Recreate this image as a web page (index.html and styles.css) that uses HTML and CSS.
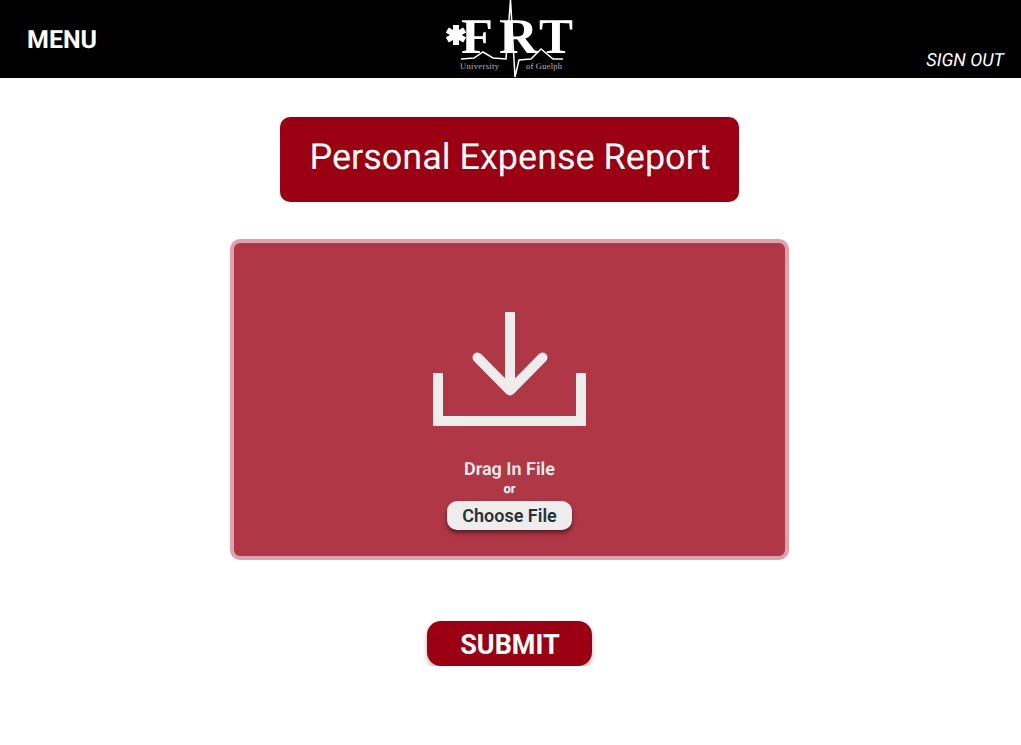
FILE: index.html
```html
<!DOCTYPE html>
<html lang="en">
<head>
  <meta charset="UTF-8">
  <meta name="viewport" content="width=device-width, initial-scale=1.0">
  <title>Personal Expense Report</title>
  <link rel="stylesheet" href="styles.css">
</head>
<body>
  <header class="top-bar">
    <a class="menu-link">MENU</a>
    <svg class="logo" viewBox="0 0 130 78" width="130" height="78">
      <g class="logo-star">
        <line x1="10" y1="25" x2="10" y2="45"></line>
        <line x1="1.300" y1="30" x2="18.700" y2="40"></line>
        <line x1="1.300" y1="40" x2="18.700" y2="30"></line>
      </g>
      <text class="logo-big" x="15" y="53" textLength="32" lengthAdjust="spacingAndGlyphs">F</text>
      <text class="logo-big" x="53" y="53" textLength="39" lengthAdjust="spacingAndGlyphs">R</text>
      <text class="logo-big" x="93" y="53" textLength="34" lengthAdjust="spacingAndGlyphs">T</text>
      <path class="logo-pulse" d="M15 59 L28 58 L37 52 L47 58 L60 59 L64.500 0 L69 77 L73 60 L85 59 L95 49 L107 59 L117 59"></path>
      <text class="logo-small" x="14" y="69" textLength="39">University</text>
      <text class="logo-small" x="80" y="69" textLength="36">of Guelph</text>
    </svg>
    <a class="sign-out">SIGN OUT</a>
  </header>

  <main class="content">
    <h1 class="page-title">Personal Expense Report</h1>

    <div class="drop-zone">
      <svg class="drop-icon" viewBox="0 0 153 114" width="153" height="114">
        <path class="drop-stem" d="M77 0 V78"></path>
        <path class="drop-arrow" d="M44.500 45.500 L77 78.500 L109.500 45.500"></path>
        <path class="drop-stem" d="M5 61 V109 H148 V61"></path>
      </svg>
      <p class="drop-text">Drag In File</p>
      <p class="drop-or">or</p>
      <button class="choose-button">Choose File</button>
    </div>

    <button class="submit-button">SUBMIT</button>
  </main>
</body>
</html>
```

FILE: styles.css
```css
body {
  font-family: Roboto, Arial, sans-serif;
  background-color: #fff;
  margin: 0;
  text-rendering: geometricPrecision;
}

.top-bar {
  height: 78px;
  background-color: #000;
  color: #fff;
  display: grid;
  grid-template-columns: 1fr auto 1fr;
  grid-template-rows: 78px;
  padding: 0 17px;
}

.menu-link {
  margin-left: 10px;
  font-size: 25px;
  font-weight: 700;
  line-height: 82px;
}

.sign-out {
  font-size: 18px;
  font-style: italic;
  justify-self: end;
  align-self: end;
  margin-bottom: 7px;
}

.logo {
  display: block;
}

.logo-star line {
  stroke: #fff;
  stroke-width: 6;
}

.logo-big {
  font-family: "Liberation Serif", serif;
  font-weight: 700;
  font-size: 50px;
  fill: #fff;
}

.logo-small {
  font-family: "Liberation Serif", serif;
  font-size: 8.500px;
  fill: #bbb;
}

.logo-pulse {
  fill: none;
  stroke: #fff;
  stroke-width: 1.500;
}

.content {
  display: flex;
  flex-direction: column;
  align-items: center;
  padding-right: 2px;
}

.page-title {
  width: 459px;
  height: 85px;
  box-sizing: border-box;
  margin: 39px 0 0;
  padding-left: 1px;
  background-color: #9b0012;
  color: #fff;
  border-radius: 10px;
  font-size: 36px;
  font-weight: 400;
  line-height: 80px;
  text-align: center;
}

.drop-zone {
  width: 559px;
  height: 321px;
  box-sizing: border-box;
  margin-top: 37px;
  padding-top: 69px;
  background-color: #b03745;
  border: 4px solid #e0a2aa;
  border-radius: 10px;
  display: flex;
  flex-direction: column;
  align-items: center;
  color: #eeeded;
}

.drop-icon {
  display: block;
}

.drop-stem,
.drop-arrow {
  fill: none;
  stroke: #eeeded;
  stroke-width: 10;
}

.drop-arrow {
  stroke-linecap: round;
  stroke-linejoin: round;
}

.drop-text {
  margin: 34px 0 0;
  font-size: 18px;
  font-weight: 600;
  line-height: 20px;
}

.drop-or {
  margin: 3px 0 0;
  font-size: 13px;
  font-weight: 700;
  line-height: 14px;
  color: #fff;
}

.choose-button {
  width: 125px;
  height: 29px;
  margin-top: 4px;
  padding: 0;
  border: none;
  border-radius: 10px;
  background-color: #eeeded;
  color: #263238;
  font-family: inherit;
  font-size: 18px;
  font-weight: 600;
  box-shadow: 0 3px 4px rgba(0, 0, 0, 0.5);
}

.submit-button {
  width: 165px;
  height: 45px;
  margin-top: 61px;
  padding: 2px 0 0 1px;
  border: none;
  border-radius: 14px;
  background-color: #9b0012;
  color: #fff;
  font-family: inherit;
  font-size: 27px;
  font-weight: 700;
  box-shadow: 0 3px 5px rgba(0, 0, 0, 0.3);
}
```
